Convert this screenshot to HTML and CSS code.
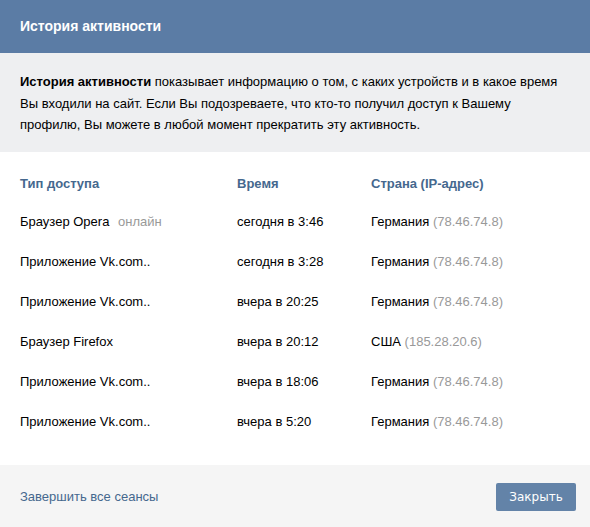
FILE: index.html
```html
<!DOCTYPE html>
<html lang="ru">
<head>
<meta charset="utf-8">
<link rel="stylesheet" href="styles.css">
</head>
<body>
<div class="box">
  <div class="box-header">История активности</div>
  <div class="info">
    <b>История активности</b> показывает информацию о том, с каких устройств и в какое время Вы входили на сайт. Если Вы подозреваете, что кто-то получил доступ к Вашему профилю, Вы можете в любой момент прекратить эту активность.
  </div>
  <div class="table">
    <div class="row head">
      <div class="c1">Тип доступа</div>
      <div class="c2">Время</div>
      <div class="c3">Страна (IP-адрес)</div>
    </div>
    <div class="row">
      <div class="c1">Браузер Opera <span class="online">онлайн</span></div>
      <div class="c2">сегодня в 3:46</div>
      <div class="c3">Германия <span class="ip">(78.46.74.8)</span></div>
    </div>
    <div class="row">
      <div class="c1">Приложение Vk.com..</div>
      <div class="c2">сегодня в 3:28</div>
      <div class="c3">Германия <span class="ip">(78.46.74.8)</span></div>
    </div>
    <div class="row">
      <div class="c1">Приложение Vk.com..</div>
      <div class="c2">вчера в 20:25</div>
      <div class="c3">Германия <span class="ip">(78.46.74.8)</span></div>
    </div>
    <div class="row">
      <div class="c1">Браузер Firefox</div>
      <div class="c2">вчера в 20:12</div>
      <div class="c3">США <span class="ip">(185.28.20.6)</span></div>
    </div>
    <div class="row">
      <div class="c1">Приложение Vk.com..</div>
      <div class="c2">вчера в 18:06</div>
      <div class="c3">Германия <span class="ip">(78.46.74.8)</span></div>
    </div>
    <div class="row">
      <div class="c1">Приложение Vk.com..</div>
      <div class="c2">вчера в 5:20</div>
      <div class="c3">Германия <span class="ip">(78.46.74.8)</span></div>
    </div>
  </div>
  <div class="footer">
    <a class="end-all">Завершить все сеансы</a>
    <button class="close-btn">Закрыть</button>
  </div>
</div>
</body>
</html>
```

FILE: styles.css
```css
html, body {
  margin: 0;
  padding: 0;
  background: #fff;
}
body {
  font-family: "Liberation Sans", Arial, sans-serif;
  font-size: 13px;
  color: #000;
}
.box {
  width: 590px;
  height: 527px;
  display: flex;
  flex-direction: column;
}
.box-header {
  background: #5b7ca5;
  color: #fff;
  font-weight: bold;
  font-size: 14px;
  height: 53px;
  line-height: 53px;
  padding: 0 20px;
  box-sizing: border-box;
}
.info {
  background: #eeeff1;
  padding: 18px 20px 16px;
  line-height: 21.5px;
  color: #000;
}
.info b {
  font-weight: bold;
}
.table {
  padding: 14px 20px 0;
  flex: 1;
}
.row {
  display: flex;
  height: 40px;
  align-items: center;
}
.row.head {
  height: 36px;
  font-weight: bold;
  color: #45688e;
  font-size: 13px;
}
.c1 { width: 217px; }
.c2 { width: 134px; }
.c3 { flex: 1; }
.online {
  color: #999;
  margin-left: 5px;
}
.ip {
  color: #999;
}
.footer {
  background: #f5f5f5;
  height: 62px;
  flex: none;
  display: flex;
  align-items: center;
  justify-content: space-between;
  padding: 0 14px 0 20px;
}
.end-all {
  color: #45688e;
  font-size: 13px;
}
.close-btn {
  background: #6383a8;
  color: #fff;
  border: none;
  border-radius: 2px;
  width: 80px;
  height: 28px;
  font-family: "DejaVu Sans", sans-serif;
  font-size: 12px;
  padding: 0;
  margin-top: 2px;
}
```
